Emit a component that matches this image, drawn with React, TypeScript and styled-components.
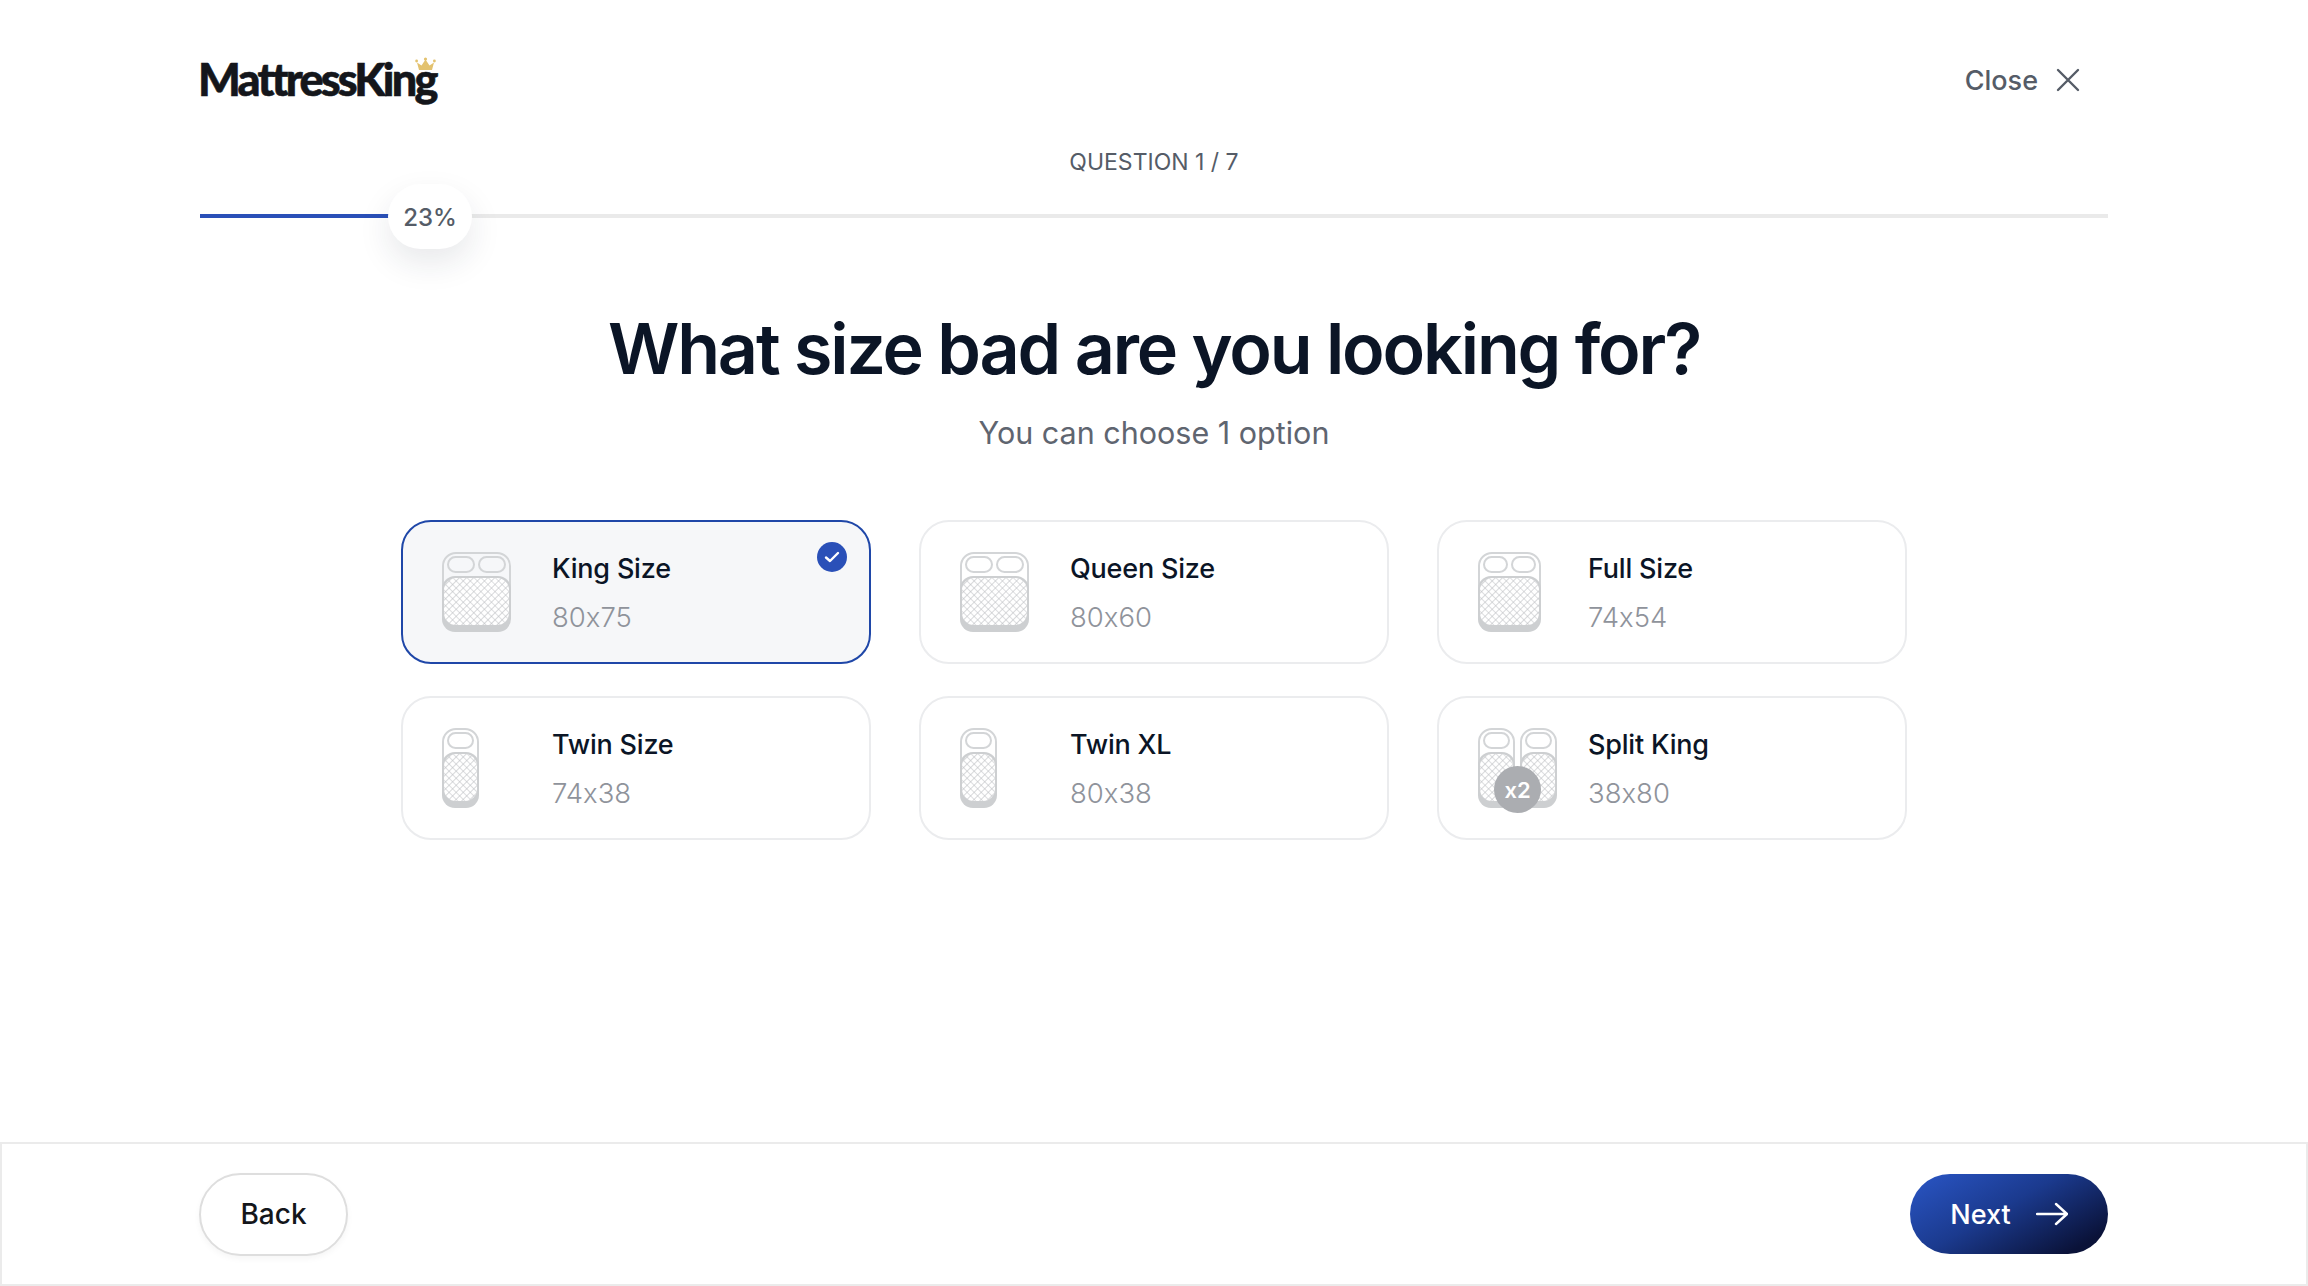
import React from 'react';
import styled, { createGlobalStyle } from 'styled-components';

const GlobalStyle = createGlobalStyle`
    html, body {
        margin: 0;
        padding: 0;
        background: #fff;
        font-family: 'Inter', 'Liberation Sans', sans-serif;
        font-feature-settings: 'calt' 0;
    }
    * { box-sizing: border-box; }
`;

type BedProps = { w: number; double?: boolean; id: string };

const Bed = ({ w, double, id }: BedProps) => {
    const pillow = (w - 17) / 2;
    return (
        <svg width={w} height={80} viewBox={`0 0 ${w} 80`} fill='none'>
            <defs>
                <pattern id={id} width='5' height='5' patternUnits='userSpaceOnUse' patternTransform='rotate(45)'>
                    <path d='M0 0H5M0 0V5' stroke='#bcbec2' strokeWidth='1.2' />
                </pattern>
            </defs>
            <rect x='1' y='1' width={w - 2} height='70' rx='13' stroke='#d3d5d7' strokeWidth='2' />
            <rect x='0' y='24' width={w} height='56' rx='13' fill='#cdcfd1' />
            <rect x='2' y='26' width={w - 4} height='47' rx='12' fill='#fff' />
            <rect x='2' y='26' width={w - 4} height='47' rx='12' fill={`url(#${id})`} />
            {double ? (
                <>
                    <rect x='6' y='5' width={pillow} height='15' rx='7.5' stroke='#d3d5d7' strokeWidth='2' />
                    <rect x={11 + pillow} y='5' width={pillow} height='15' rx='7.5' stroke='#d3d5d7' strokeWidth='2' />
                </>
            ) : (
                <rect x='6' y='5' width={w - 12} height='15' rx='7.5' stroke='#d3d5d7' strokeWidth='2' />
            )}
        </svg>
    );
};

const options = [
    { name: 'King Size', size: '80x75', bedWidth: 69, selected: true },
    { name: 'Queen Size', size: '80x60', bedWidth: 69 },
    { name: 'Full Size', size: '74x54', bedWidth: 63 },
    { name: 'Twin Size', size: '74x38', bedWidth: 37 },
    { name: 'Twin XL', size: '80x38', bedWidth: 37 },
    { name: 'Split King', size: '38x80', bedWidth: 37, split: true },
];

const App = () => {
    return (
        <Page>
            <GlobalStyle />
            <Top>
                <Header>
                    <Logo>
                        MattressKing
                        <Crown width='21' height='14' viewBox='0 0 21 14'>
                            <path d='M4 13L2 5.5l4.5 3L10.5 2.5l4 6 4.5-3L17 13z' fill='#e3c26f' />
                            <circle cx='10.5' cy='2' r='1.6' fill='#e3c26f' />
                            <circle cx='1.6' cy='4' r='1.4' fill='#e3c26f' />
                            <circle cx='19.4' cy='4' r='1.4' fill='#e3c26f' />
                        </Crown>
                    </Logo>
                    <Close>
                        Close
                        <svg width='24' height='24' viewBox='0 0 24 24' fill='none' stroke='#555c67' strokeWidth='2.4' strokeLinecap='round'>
                            <path d='M2 2L22 22M22 2L2 22' />
                        </svg>
                    </Close>
                </Header>
                <Question>QUESTION 1 / 7</Question>
                <Progress>
                    <ProgressFill />
                    <Percent>23%</Percent>
                </Progress>
            </Top>
            <Title>What size bad are you looking for?</Title>
            <Subtitle>You can choose 1 option</Subtitle>
            <Grid>
                {options.map((o, i) => (
                    <Card key={o.name} $selected={o.selected}>
                        <IconSlot>
                            {o.split ? (
                                <SplitBeds>
                                    <Bed w={o.bedWidth} id={`hatch-${i}a`} />
                                    <Bed w={o.bedWidth} id={`hatch-${i}b`} />
                                    <Multiplier>x2</Multiplier>
                                </SplitBeds>
                            ) : (
                                <Bed w={o.bedWidth} double={o.bedWidth > 40} id={`hatch-${i}`} />
                            )}
                        </IconSlot>
                        <Info>
                            <Name>{o.name}</Name>
                            <Size>{o.size}</Size>
                        </Info>
                        {o.selected && (
                            <Check>
                                <svg width='16' height='12' viewBox='0 0 16 12' fill='none' stroke='#fff' strokeWidth='2.4' strokeLinecap='round' strokeLinejoin='round'>
                                    <path d='M2 6.5L6 10L14 2' />
                                </svg>
                            </Check>
                        )}
                    </Card>
                ))}
            </Grid>
            <Footer>
                <BackButton>Back</BackButton>
                <NextButton>
                    Next
                    <svg width='32' height='24' viewBox='0 0 32 24' fill='none' stroke='#fff' strokeWidth='2.4' strokeLinecap='round' strokeLinejoin='round'>
                        <path d='M1 12H31M20 2L31 12L20 22' />
                    </svg>
                </NextButton>
            </Footer>
        </Page>
    );
};

export default App;

const Page = styled.div`
    height: 1286px;
    width: 2308px;
    display: flex;
    flex-direction: column;
    align-items: center;
    overflow: hidden;
    background: #fff;
`;

const Top = styled.div`
    width: 1908px;
    padding-top: 50px;
`;

const Header = styled.div`
    height: 60px;
    display: flex;
    justify-content: space-between;
    align-items: center;
    padding-right: 28px;
`;

const Logo = styled.div`
    position: relative;
    margin-left: -2px;
    margin-top: -2px;
    font-family: 'Lato', sans-serif;
    font-weight: 900;
    font-size: 45px;
    letter-spacing: -2.8px;
    -webkit-text-stroke: 0.6px #14161b;
    color: #14161b;
    line-height: 60px;
`;

const Crown = styled.svg`
    position: absolute;
    right: 0;
    top: 8px;
`;

const Close = styled.div`
    display: flex;
    align-items: center;
    gap: 18px;
    font-size: 27px;
    font-weight: 500;
    color: #555c67;
`;

const Question = styled.div`
    margin-top: 37px;
    text-align: center;
    font-size: 23px;
    line-height: 30px;
    color: #555c67;
`;

const Progress = styled.div`
    position: relative;
    margin-top: 37px;
    height: 4px;
    background: #eaeaea;
`;

const ProgressFill = styled.div`
    width: 190px;
    height: 100%;
    background: #2a50b8;
`;

const Percent = styled.div`
    position: absolute;
    left: 188px;
    top: -30px;
    width: 84px;
    height: 65px;
    border-radius: 33px;
    background: #fff;
    box-shadow: 0 14px 32px rgba(30, 40, 60, 0.1);
    display: flex;
    align-items: center;
    justify-content: center;
    padding-top: 2px;
    font-size: 24px;
    font-weight: 500;
    color: #555c67;
`;

const Title = styled.h1`
    margin: 88px 0 0;
    font-size: 70px;
    line-height: 86px;
    font-weight: 600;
    letter-spacing: -2.15px;
    color: #0b1526;
`;

const Subtitle = styled.div`
    margin-top: 21px;
    font-size: 30.5px;
    line-height: 40px;
    font-weight: 400;
    color: #5f6570;
`;

const Grid = styled.div`
    margin-top: 67px;
    display: grid;
    grid-template-columns: repeat(3, 470px);
    grid-auto-rows: 144px;
    gap: 32px 48px;
`;

const Card = styled.div<{ $selected?: boolean }>`
    position: relative;
    display: flex;
    align-items: center;
    padding: 0 39px;
    border-radius: 30px;
    border: ${(p) => (p.$selected ? '2px solid #1f47a8' : '2px solid #ebecee')};
    background: ${(p) => (p.$selected ? '#f6f7f9' : '#fff')};
`;

const IconSlot = styled.div`
    width: 110px;
    display: flex;
`;

const SplitBeds = styled.div`
    position: relative;
    display: flex;
    gap: 5px;
`;

const Multiplier = styled.div`
    position: absolute;
    left: 16px;
    bottom: -5px;
    width: 47px;
    height: 47px;
    border-radius: 50%;
    background: #abadb1;
    color: #fff;
    display: flex;
    align-items: center;
    justify-content: center;
    font-size: 22px;
    font-weight: 600;
`;

const Info = styled.div`
    display: flex;
    flex-direction: column;
    gap: 14px;
    padding-top: 1px;
`;

const Name = styled.div`
    font-size: 27px;
    line-height: 34px;
    font-weight: 500;
    letter-spacing: -0.2px;
    color: #0b1526;
`;

const Size = styled.div`
    font-size: 27.5px;
    line-height: 34px;
    font-weight: 300;
    color: #8f939b;
`;

const Check = styled.div`
    position: absolute;
    right: 22px;
    top: 20px;
    width: 30px;
    height: 30px;
    border-radius: 50%;
    background: #2a50b8;
    display: flex;
    align-items: center;
    justify-content: center;
`;

const Footer = styled.div`
    margin-top: auto;
    width: 100%;
    height: 144px;
    border: 2px solid #ebebeb;
    display: flex;
    align-items: center;
    justify-content: space-between;
    padding: 0 198px 0 197px;
`;

const BackButton = styled.button`
    width: 149px;
    height: 83px;
    border-radius: 42px;
    border: 2px solid #dedede;
    background: #fff;
    box-shadow: 0 3px 6px rgba(0, 0, 0, 0.04);
    font-family: inherit;
    font-size: 28px;
    font-weight: 500;
    color: #14161b;
`;

const NextButton = styled.button`
    width: 198px;
    height: 80px;
    border-radius: 40px;
    border: none;
    background: linear-gradient(150deg, #2a56c6 0%, #1b3a8e 45%, #0a1238 88%);
    display: flex;
    align-items: center;
    justify-content: center;
    gap: 25px;
    font-family: inherit;
    font-size: 27px;
    font-weight: 500;
    color: #fff;
`;
